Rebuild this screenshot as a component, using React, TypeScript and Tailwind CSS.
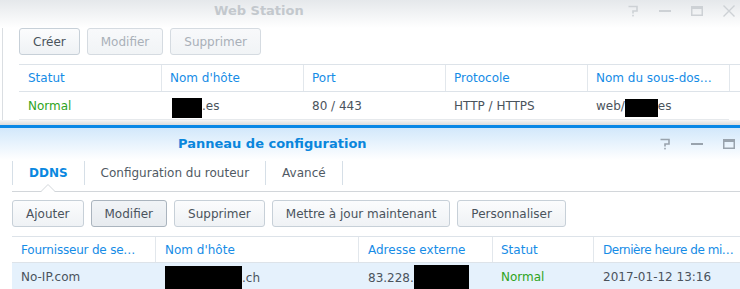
import React from 'react'

function HelpIcon({ color }: { color: string }) {
  return (
    <svg width="12" height="12" viewBox="0 0 12 12" fill="none">
      <path d="M1.5 1.5H10V6H6V8.5" stroke={color} strokeWidth="1.6" />
      <rect x="5.2" y="9.8" width="1.6" height="1.6" fill={color} />
    </svg>
  )
}

function MinIcon({ color }: { color: string }) {
  return (
    <svg width="12" height="12" viewBox="0 0 12 12">
      <rect x="0" y="5" width="12" height="2" fill={color} />
    </svg>
  )
}

function MaxIcon({ color }: { color: string }) {
  return (
    <svg width="12" height="12" viewBox="0 0 12 12" fill="none">
      <rect x="0.75" y="1.75" width="10.5" height="8.5" stroke={color} strokeWidth="1.5" />
      <rect x="0" y="1" width="12" height="3" fill={color} />
    </svg>
  )
}

function CloseIcon({ color }: { color: string }) {
  return (
    <svg width="12" height="12" viewBox="0 0 12 12" fill="none">
      <path d="M0.5 0.5L11.5 11.5M11.5 0.5L0.5 11.5" stroke={color} strokeWidth="1.4" />
    </svg>
  )
}

function WinButtons({ color }: { color: string }) {
  return (
    <div className="ml-auto mr-[5px] flex items-center gap-[20px]">
      <HelpIcon color={color} />
      <MinIcon color={color} />
      <MaxIcon color={color} />
      <CloseIcon color={color} />
    </div>
  )
}

function Btn({ label, disabled, hover }: { label: string; disabled?: boolean; hover?: boolean }) {
  if (disabled) {
    return (
      <div className="h-[27px] px-[13px] flex items-center rounded-[3px] border border-[#d5dbe1] bg-gradient-to-b from-[#f8f9fb] to-[#f1f4f6] text-[#a9b0b8]">
        {label}
      </div>
    )
  }
  if (hover) {
    return (
      <div className="h-[27px] px-[13px] flex items-center rounded-[3px] border border-[#aab4be] bg-gradient-to-b from-[#f1f4f7] to-[#e7ebef] text-[#4a535c]">
        {label}
      </div>
    )
  }
  return (
    <div className="h-[27px] px-[13px] flex items-center rounded-[3px] border border-[#c7d0d8] bg-gradient-to-b from-[#fbfcfd] to-[#eff2f5] text-[#4a535c]">
      {label}
    </div>
  )
}

function Redacted({ w, h }: { w: number; h: number }) {
  return <span className="inline-block bg-black shrink-0 mt-[4px]" style={{ width: w, height: h }} />
}

const webCols = ['Statut', "Nom d'hôte", 'Port', 'Protocole', 'Nom du sous-dos…']

export default function App() {
  return (
    <div className="w-[740px] h-[289px] overflow-hidden bg-white text-[12px] text-[#4a535c] font-['DejaVu_Sans',sans-serif]">
      {/* Web Station (inactive window) */}
      <div className="h-[120px]">
        <div className="h-[28px] bg-gradient-to-b from-[#e5e8eb] to-white">
          <div className="h-[22px] flex items-center">
            <span className="ml-[214px] text-[13px] font-bold text-[#c3c8cd]">Web Station</span>
            <WinButtons color="#cdd1d5" />
          </div>
        </div>
        <div className="ml-[2px] h-[92px] border-l border-[#dadee2] pl-[16px]">
          <div className="flex gap-[7px]">
            <Btn label="Créer" />
            <Btn label="Modifier" disabled />
            <Btn label="Supprimer" disabled />
          </div>
          <div className="mt-[9px] flex h-[28px] border-y border-[#dde3e9] text-[#168ce6]">
            {webCols.map((c, i) => (
              <div
                key={c}
                className={
                  i === 0
                    ? 'w-[143px] shrink-0 border-r border-[#e2e7ec] pl-[9px] flex items-center whitespace-nowrap'
                    : 'w-[142px] shrink-0 border-r border-[#e2e7ec] pl-[8px] flex items-center whitespace-nowrap'
                }
              >
                {c}
              </div>
            ))}
            <div className="flex-1" />
          </div>
          <div className="flex h-[28px] w-[710px] border-b border-[#e6e9ec]">
            <div className="w-[142px] pl-[9px] flex items-center text-[#2fa422]">Normal</div>
            <div className="w-[142px] pl-[11px] flex items-center">
              <Redacted w={30} h={20} />
              <span>.es</span>
            </div>
            <div className="w-[142px] pl-[9px] flex items-center">80 / 443</div>
            <div className="w-[142px] pl-[9px] flex items-center">HTTP / HTTPS</div>
            <div className="w-[142px] pl-[9px] flex items-center">
              <span>web/</span>
              <Redacted w={33} h={18} />
              <span>es</span>
            </div>
          </div>
        </div>
      </div>

      {/* window shadow */}
      <div className="h-[5px] bg-gradient-to-b from-[#f6f6f6] to-[#dcdcdc]" />

      {/* Panneau de configuration (active window) */}
      <div className="w-[772px] border-t-[3px] border-[#0a88e6]">
        <div className="h-[32px] flex items-center bg-gradient-to-b from-[#d2e8fb] to-white">
          <span className="ml-[178px] text-[13px] font-bold text-[#0a86dc]">Panneau de configuration</span>
          <WinButtons color="#99a3ad" />
        </div>

        <div className="relative ml-[12px] h-[32px] border-b border-[#d2d6da]">
          <div className="flex pt-[1px]">
            <div className="h-[24px] border-l border-[#d6dfe7] px-[16px] flex items-center font-bold text-[#0a87e0]">DDNS</div>
            <div className="h-[24px] border-l border-[#d6dfe7] px-[16px] flex items-center text-[#505a64]">Configuration du routeur</div>
            <div className="h-[24px] border-l border-r border-[#d6dfe7] px-[16px] flex items-center text-[#505a64]">Avancé</div>
          </div>
          <svg className="absolute left-[29px] bottom-[-1px]" width="14" height="8" viewBox="0 0 14 8">
            <path d="M0 8L7 1L14 8Z" fill="white" />
            <path d="M0 7.5L7 0.5L14 7.5" fill="none" stroke="#d2d6da" strokeWidth="1" />
          </svg>
        </div>

        <div className="ml-[12px] mt-[8px] flex gap-[7px]">
          <Btn label="Ajouter" />
          <Btn label="Modifier" hover />
          <Btn label="Supprimer" />
          <Btn label="Mettre à jour maintenant" />
          <Btn label="Personnaliser" />
        </div>

        <div className="ml-[12px] mt-[9px]">
          <div className="flex h-[27px] border-y border-[#dde3e9] text-[#168ce6] whitespace-nowrap">
            <div className="w-[144px] border-r border-[#e2e7ec] pl-[9px] flex items-center tracking-[-0.2px]">Fournisseur de se…</div>
            <div className="w-[203px] border-r border-[#e2e7ec] pl-[9px] flex items-center">Nom d'hôte</div>
            <div className="w-[134px] border-r border-[#e2e7ec] pl-[9px] flex items-center">Adresse externe</div>
            <div className="w-[101px] border-r border-[#e2e7ec] pl-[8px] flex items-center">Statut</div>
            <div className="flex-1 border-r border-[#e2e7ec] pl-[9px] flex items-center">
              <span className="tracking-[-0.45px]">Dernière heure de mi…</span>
            </div>
          </div>
          <div className="flex h-[28px] bg-[#e5f1fc] whitespace-nowrap">
            <div className="w-[144px] pl-[9px] flex items-center">No-IP.com</div>
            <div className="w-[203px] pl-[9px] flex items-start">
              <span className="inline-block w-[77px] h-[26px] bg-black mt-[3px]" />
              <span className="mt-[6px]">.ch</span>
            </div>
            <div className="w-[134px] pl-[9px] flex items-start">
              <span className="mt-[6px]">83.228.</span>
              <span className="inline-block w-[55px] h-[26px] bg-black mt-[2px]" />
            </div>
            <div className="w-[101px] pl-[8px] flex items-center text-[#2fa422]">Normal</div>
            <div className="flex-1 pl-[9px] flex items-center">2017-01-12 13:16</div>
          </div>
        </div>
      </div>
    </div>
  )
}
